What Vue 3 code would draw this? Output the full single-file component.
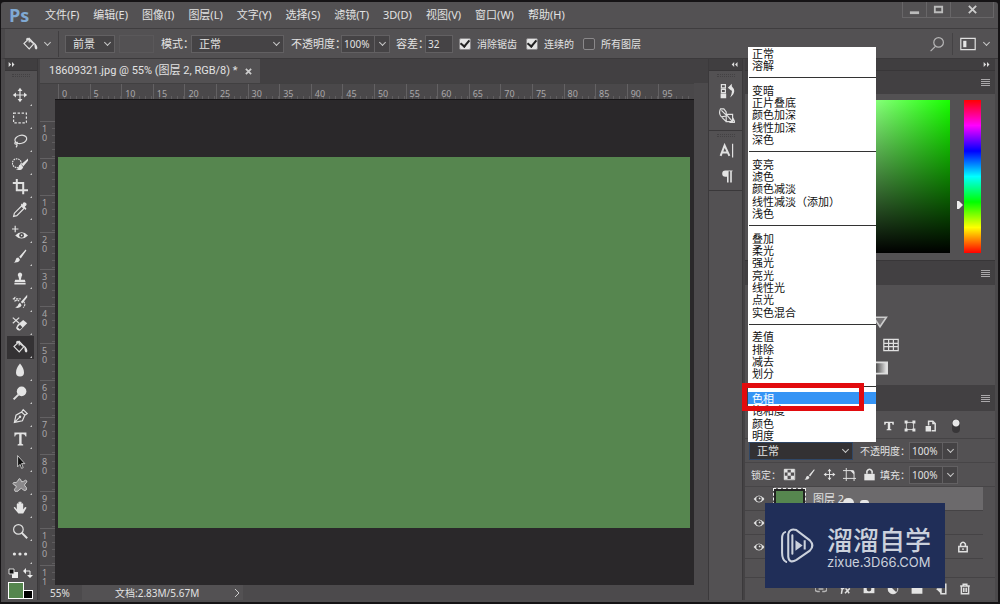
<script setup>
import { ref } from 'vue'

const menus = ['文件(F)', '编辑(E)', '图像(I)', '图层(L)', '文字(Y)', '选择(S)', '滤镜(T)', '3D(D)', '视图(V)', '窗口(W)', '帮助(H)']
const bucket = '<path d="M9 3 2.500 9.500 9 16l6-6.500z M6 7V3.500a2 2 0 0 1 3 0V8" class="s"/><path d="M15 8q5 4 4 8-2 2-3-1z" class="f"/><path d="m8 4 6 5" class="s"/>'
const brush = '<path d="M17 2 9 11l2 2 7-10zM8 12q-3 0-3.500 3T2 18q6 1 8-3z" class="f"/>'
const move = '<path d="M10 3v14M3 10h14" class="s"/><path d="M10 1 7 5h6zM10 19l-3-4h6zM1 10l4-3v6zM19 10l-4-3v6z" class="f"/>'
const tools = [
  { name: '移动', icon: move },
  { name: '矩形选框', icon: '<path d="M2 4h16v12H2z" class="s" stroke-dasharray="3 2"/>' },
  { name: '套索', icon: '<ellipse cx="11" cy="8" rx="7.500" ry="5" transform="rotate(-15 11 8)" class="s"/><path d="M5 11q-3 2 0 3 3-1 1-3M6 13q1 3-1 5" class="s"/>' },
  { name: '快速选择', icon: '<circle cx="6" cy="9" r="5.500" class="s" stroke-dasharray="2 1"/><path d="M20 3l-8 7 2 3 6-7zM11 10q-3 1-3 5l-3 2q7 2 9-3z" class="f"/>' },
  { name: '裁剪', icon: '<path d="M6 0v14h14M1 5h13v14" class="t"/>' },
  { name: '吸管', icon: '<path d="m12 5-9 9-1 4 4-1 9-9z" class="s"/><path d="m11 4 6 6 1-2-2-2q4-3 1-5t-4 2l-1-1z" class="f"/>' },
  { name: '红眼', icon: '<path d="M4 1v8M0 5h8" class="s"/><path d="M4 13q8-8 16 0-8 8-16 0z" class="f"/><circle cx="12" cy="13" r="3" class="d"/><circle cx="12" cy="13" r="1" class="f"/>' },
  { name: '画笔', icon: brush },
  { name: '仿制图章', icon: '<path d="M10 2a3 3 0 0 1 2 5l-1 4h5l1 3H3l1-3h5L8 7a3 3 0 0 1 2-5zM3 15h14v2H3z" class="f"/>' },
  { name: '历史记录画笔', icon: '<path d="M19 1l-8 9 2 2 6-8zM10 11q-2 1-3 4l-3 2q6 2 8-3z" class="f"/><path d="M1 6h10M2 6l3-3M3 9q4-2 6 0M14 9q4 4 0 8" class="s" stroke-dasharray="3 1"/>' },
  { name: '橡皮擦', icon: '<path d="m1 2 8 7M9 2 1 9" class="s"/><path d="m7 11 7-6 5 4-9 9q-3 1-5-3z" class="f"/><path d="m7 14 3-3 3 3-3 3z" class="d"/>' },
  { name: '油漆桶', icon: bucket, active: true },
  { name: '模糊', icon: '<path d="M10 2q5 6 5 11a5 5 0 0 1-10 0q0-5 5-11z" class="f"/>' },
  { name: '减淡', icon: '<circle cx="12" cy="8" r="6" class="f"/><path d="m8 12-6 6" class="t"/>' },
  { name: '钢笔', icon: '<path d="M3 18 5 9l7-4 4 4-3 7zM12 5l2-3 5 5-3 2M3 18l7-7" class="s"/><circle cx="10" cy="11" r="1.500" class="f"/>' },
  { name: '文字', icon: '<path d="M3 2h15v5h-1q-1-3-3-3h-2v12l2 1v1H7v-1l2-1V4H7Q4 4 4 7H3z" class="f"/>' },
  { name: '路径选择', icon: '<path d="M7 2v14l3-3 2 5 2-1-2-5h4z" fill="#111" stroke="#e2e2e2"/>' },
  { name: '自定形状', icon: '<path d="M9 2q2 0 3 4 2 0 5-2 3 1 1 3-3 2-2 4 3 2 2 5-2 2-4 0-2-3-4-1-2 4-6 3-2-2 0-4 2-1 1-3-3-1-4-3 1-2 4-1 2-1 4-5z" fill="#8a888a" stroke="#e0e0e0"/>' },
  { name: '抓手', icon: '<path d="M6 12V5q1-2 2 0v4-6q1-2 2 0v6-6q1-2 2 0v6-4q1-2 2 0v7l2-3q2-1 2 1l-4 7H8l-5-6q-2-3 1-2z" class="f"/>' },
  { name: '缩放', icon: '<circle cx="8" cy="8" r="6" class="s"/><path d="m12 12 7 7" class="t"/>' },
  { name: '更多', icon: '<circle cx="3" cy="10" r="2" class="f"/><circle cx="10" cy="10" r="2" class="f"/><circle cx="17" cy="10" r="2" class="f"/>' }
]
const across = Array.from({ length: 20 }, (_, i) => i * 5)
const down = ['10', '0', '10', '20', '30', '40', '50', '60', '70', '80', '90', '100', '11']
const modes = ['正常', '溶解', '', '变暗', '正片叠底', '颜色加深', '线性加深', '深色', '', '变亮', '滤色', '颜色减淡', '线性减淡（添加）', '浅色', '', '叠加', '柔光', '强光', '亮光', '线性光', '点光', '实色混合', '', '差值', '排除', '减去', '划分', '', '色相', '饱和度', '颜色', '明度']
const filters = [
  { name: '文字图层', icon: '<path d="M2 3h16v5h-2l-1-3h-3v10l2 1v1H6v-1l2-1V5H5L4 8H2z" class="f"/>' },
  { name: '形状图层', icon: '<path d="M4 4h12v12H4z" class="s"/><path d="M1 1h5v5H1zM14 1h5v5h-5zM1 14h5v5H1zM14 14h5v5h-5z" class="f"/>' },
  { name: '智能对象', icon: '<path d="M6 9V2h7l4 4v12h-6" class="t"/><path d="M12 2v5h5zM1 10h9v9H1z" class="f"/>' }
]
const locks = [
  { name: '锁定透明像素', icon: '<path d="M2 2h16v16H2z" class="s"/><path d="M2 2h5v5H2zM12 2h5v5h-5zM7 7h5v5H7zM2 12h5v5H2zM12 12h5v5h-5z" class="f"/>' },
  { name: '锁定图像像素', icon: brush },
  { name: '锁定位置', icon: move },
  { name: '锁定画板', icon: '<path d="M5 0v20M0 4h15l2 2v14M0 16h20" class="s"/><path d="m11 4 6 6V4z" class="f"/>' },
  { name: '全部锁定', icon: '<path d="M2 9h16v10H2z" class="f"/><path d="M6 9V5q4-6 8 0v4" class="t"/>' }
]
const actions = [
  { name: '链接图层', dim: true, icon: '<path d="M8 6H4a4 4 0 0 0 0 8h4M12 6h4a4 4 0 0 1 0 8h-4M6 10h8" class="t"/>' },
  { name: '图层样式', icon: '<path d="M10 4Q7 2 6 7L4 18M3 9h6M11 9l6 8M18 9l-8 8" class="t"/>' },
  { name: '图层蒙版', icon: '<path d="M1 3h18v14H1z" class="f"/><circle cx="10" cy="10" r="4" class="d"/>' },
  { name: '调整图层', icon: '<circle cx="10" cy="10" r="8" class="s"/><path d="M4 4a8 8 0 0 0 12 12z" class="f"/>' },
  { name: '新建组', icon: '<path d="M1 3h7l2 3h9v12H1z" class="f"/>' },
  { name: '新建图层', icon: '<path d="M6 2h12v16h-8V10H3" class="t"/><path d="M2 10h8v8z" class="f"/>' },
  { name: '删除图层', icon: '<path d="M2 5h16M7 5V2h6v3M4 5v13h12V5M8 8v7M12 8v7" class="t"/>' }
]
const eye = '<path d="M1 10q9-12 18 0-9 12-18 0z" class="f"/><circle cx="10" cy="10" r="4.500" class="d"/><circle cx="11" cy="9" r="1.500" class="f"/>'
const padlock = '<path d="M3 9h14v9H3zM6 9V5q4-6 8 0v4M10 12v3" class="t"/>'
const fore = ref('前景')
const mode = ref('正常')
const blend = ref('正常')
</script>

<template>
  <div class="app">
    <header class="menubar">
      <span class="logo">Ps</span>
      <nav><button v-for="m in menus" :key="m">{{ m }}</button></nav>
      <div class="winbtns">
        <button aria-label="最小化"><svg viewBox="0 0 12 12"><path d="M1 8h10v3H1z" fill="#bbb" /></svg></button>
        <button aria-label="最大化"><svg viewBox="0 0 12 12"><path d="M2 3h8v6H2z" fill="none" stroke="#bbb" stroke-width="2" /></svg></button>
        <button class="close" aria-label="关闭"><svg viewBox="0 0 12 12"><path d="m2 2 8 8m0-8-8 8" stroke="#ccc" stroke-width="2" /></svg></button>
      </div>
    </header>

    <section class="options">
      <button class="preset" aria-label="油漆桶预设"><svg class="ic" viewBox="0 0 20 20" v-html="bucket" /><i class="chev" /></button>
      <span class="pick fore"><select v-model="fore" aria-label="填充源"><option>前景</option></select><i class="chev" /></span>
      <span class="ghost" />
      <label for="mode">模式：</label>
      <span class="pick mode"><select id="mode" v-model="mode"><option>正常</option></select><i class="chev" /></span>
      <label class="opl" for="op">不透明度：</label>
      <span class="num"><input id="op" value="100%" /><button aria-label="不透明度滑块"><i class="chev" /></button></span>
      <label class="tol" for="tol">容差：</label>
      <input id="tol" class="tolbox" value="32" />
      <label class="chk"><input type="checkbox" checked />消除锯齿</label>
      <label class="chk"><input type="checkbox" checked />连续的</label>
      <label class="chk"><input type="checkbox" />所有图层</label>
      <div class="optright">
        <button aria-label="搜索"><svg class="ic dim" viewBox="0 0 20 20"><circle cx="12" cy="8" r="6" class="s" /><path d="m8 13-6 6" class="s" /></svg></button>
        <button class="space" aria-label="工作区"><svg class="ic" viewBox="0 0 20 20"><path d="M1 3h18v14H1z" class="s" /><path d="M4 6h4v8H4z" class="f" /></svg><i class="chev" /></button>
      </div>
    </section>

    <div class="work">
      <aside class="toolbar">
        <div class="dockhead left"><svg viewBox="0 0 8 6"><path d="m0 0 3 3-3 3zM4 0l3 3-3 3z" fill="#ddd" /></svg></div>
        <div class="grip" />
        <div class="tools">
          <button v-for="t in tools" :key="t.name" :class="{ active: t.active }" :aria-label="t.name"><svg class="ic" viewBox="0 0 20 20" v-html="t.icon" /></button>
        </div>
        <div class="colors">
          <div class="mini">
            <button aria-label="默认颜色"><svg viewBox="0 0 10 10"><path d="M4 4h6v6H4z" fill="#eee" /><path d="M1 1h5v5H1z" fill="#111" stroke="#ddd" /></svg></button>
            <button aria-label="切换颜色"><svg viewBox="0 0 10 10"><path d="M2 3h5v5" fill="none" stroke="#eee" /><path d="M0 3l3-3v6zM7 10 4 7h6z" fill="#eee" /></svg></button>
          </div>
          <div class="swatches"><button class="fg" aria-label="前景色" /><button class="bg" aria-label="背景色" /></div>
        </div>
      </aside>

      <main class="doc">
        <div class="tabs"><div class="tab">18609321.jpg @ 55% (图层 2, RGB/8) *<button aria-label="关闭文档"><svg viewBox="0 0 8 8"><path d="m1 1 6 6m0-6-6 6" stroke="#ccc" stroke-width="2" /></svg></button></div></div>
        <div class="hruler"><span v-for="n in across" :key="n">{{ n }}</span></div>
        <div class="stage">
          <div class="vruler"><span v-for="(n, i) in down" :key="i">{{ n }}</span></div>
          <div class="canvas"><div class="image" /></div>
        </div>
        <footer class="status"><span class="zoom">55%</span><div class="info"><span>文档:2.83M/5.67M</span><svg viewBox="0 0 6 10"><path d="m1 1 4 4-4 4" fill="none" stroke="#ccc" /></svg></div></footer>
      </main>

      <aside class="strip">
        <div class="dockhead"><svg viewBox="0 0 8 6"><path d="M3 0 0 3l3 3zM7 0 4 3l3 3z" fill="#ddd" /></svg></div>
        <div class="group">
          <div class="grip" />
          <button aria-label="历史记录"><svg class="ic" viewBox="0 0 20 20"><path d="M3 2h5v4H3zM3 8h5v4H3z" class="s" /><path d="M2 13h7v6H2zM11 6l5-5v3q7 7-2 14 3-7 2-10v2z" class="f" /></svg></button>
          <button aria-label="画笔预设"><svg class="ic" viewBox="0 0 20 20"><path d="M2 1q-3 6 1 10l6-1V5L6 1zM3 3l6 6M9 8h8v9H9zM9 8l8 9M17 12l3 6h-7M4 12l5 5" class="s" /></svg></button>
        </div>
        <div class="group">
          <div class="grip" />
          <button aria-label="字符"><svg class="ic" viewBox="0 0 20 20"><path d="m2 16 5-13 6 13M4 12h7" class="t" /><path d="M17 1v17" class="s" /></svg></button>
          <button aria-label="段落"><svg class="ic" viewBox="0 0 20 20"><path d="M10 3v8H8a4 4 0 0 1 0-8zM10 3h2v15h-2zM14 3h2v15h-2zM9 3h8v1H9z" class="f" /></svg></button>
        </div>
      </aside>

      <aside class="panels">
        <div class="dockhead"><svg viewBox="0 0 8 6"><path d="m0 0 3 3-3 3zM4 0l3 3-3 3z" fill="#ddd" /></svg></div>
        <div class="phead"><button aria-label="颜色面板菜单" class="burger" /></div>
        <div class="color"><div class="field" /><svg class="mark" viewBox="0 0 6 8"><path d="M0 0h2l4 4-4 4H0z" fill="#eee" /></svg><div class="hue" /></div>
        <div class="phead second"><button aria-label="调整面板菜单" class="burger" /></div>
        <div class="adjust">
          <div><svg class="ic" viewBox="0 0 20 20"><path d="M2 4h16l-8 12z" fill="#777577" stroke="#ccc" stroke-width="2" /></svg></div>
          <div class="mid"><svg class="ic" viewBox="0 0 20 20"><path d="M1 3h18v14H1zM7 3v14M13 3v14M1 8h18M1 12h18" class="s" /></svg></div>
          <div><svg class="ic" viewBox="0 0 20 20"><defs><linearGradient id="fade"><stop stop-color="#222" /><stop offset="1" stop-color="#eee" /></linearGradient></defs><path d="M1 3h18v14H1z" fill="url(#fade)" stroke="#ddd" stroke-width="2" /></svg></div>
        </div>
        <div class="phead third"><button aria-label="图层面板菜单" class="burger" /></div>
        <div class="filter"><button v-for="f in filters" :key="f.name" :aria-label="f.name"><svg class="ic" viewBox="0 0 20 20" v-html="f.icon" /></button><button class="toggle" aria-label="过滤开关" /></div>
        <div class="prow blendrow">
          <div class="pick blend">
            <select v-model="blend" aria-label="混合模式"><option v-for="m in modes.filter(Boolean)" :key="m">{{ m }}</option></select><i class="chev" />
            <ul class="modes" role="listbox" aria-label="混合模式列表">
              <li v-for="(m, i) in modes" :key="i" :role="m ? 'option' : 'separator'" :class="{ sep: !m, hot: m === '色相' }">{{ m }}<span v-if="m === '色相'" class="redbox" /></li>
            </ul>
          </div>
          <label for="lop">不透明度：</label>
          <span class="num"><input id="lop" value="100%" /><button aria-label="图层不透明度滑块"><i class="chev" /></button></span>
        </div>
        <div class="prow">
          <span class="lockl">锁定：</span>
          <div class="locks"><button v-for="l in locks" :key="l.name" :aria-label="l.name"><svg class="ic" viewBox="0 0 20 20" v-html="l.icon" /></button></div>
          <label for="fill">填充：</label>
          <span class="num"><input id="fill" value="100%" /><button aria-label="填充滑块"><i class="chev" /></button></span>
        </div>
        <div class="layers">
          <div v-for="n in 3" :key="n" class="layer" :class="{ sel: n === 1 }">
            <button class="vis" aria-label="可见性"><svg class="ic" viewBox="0 0 20 20" v-html="eye" /></button>
            <div class="body"><template v-if="n === 1"><span class="thumb" /><span>图层 2</span></template><svg v-if="n === 3" class="ic lk" viewBox="0 0 20 20" v-html="padlock" /></div>
          </div>
        </div>
        <div class="actions"><button v-for="a in actions" :key="a.name" :class="{ dim: a.dim }" :aria-label="a.name"><svg class="ic" viewBox="0 0 20 20" v-html="a.icon" /></button></div>
        <div class="brand">
          <i class="blob" /><i class="blob small" />
          <svg viewBox="0 0 34 36"><path d="M5 5Q2 6 2 11v14q0 7 4 9M12 26V8M8 29V7q1-6 8-4l13 10q5 5 0 10L16 32q-7 4-8-3z" fill="none" stroke="#cbd1dc" stroke-width="2" stroke-linecap="round" /><path d="m15 13 7 5-7 5zM23 13h2v9h-2z" fill="#cbd1dc" /></svg>
          <div><b>溜溜自学</b><span>zixue.3D66.COM</span></div>
        </div>
      </aside>
    </div>
  </div>
</template>

<style>
body { margin: 0; background: #151315; overflow: hidden; }
.ic .s { fill: none; stroke: #e0e0e0; stroke-width: 1.5; }
.ic .t { fill: none; stroke: #e0e0e0; stroke-width: 2.5; }
.ic .f { fill: #e4e4e4; }
.ic .d { fill: #4a484a; }
</style>

<style scoped>
.app, .app * { box-sizing: border-box; }
.app { height: 100vh; min-height: 604px; display: flex; flex-direction: column; padding: 2px 2px 2px 1px; background: #151315; color: #e2e2e2; font: 11px/16px "Noto Sans", "Noto Sans CJK SC", sans-serif; }
button { padding: 0; border: 0; background: none; color: inherit; font: inherit; display: flex; align-items: center; justify-content: center; }
input, select { margin: 0; color: inherit; font: inherit; border: 1px solid #626062; background: #454345; border-radius: 0; appearance: none; min-width: 0; outline: 0; }
svg { display: block; flex: none; }
label, span { white-space: nowrap; }
.ic { width: 16px; height: 16px; }
.chev { width: 5px; height: 5px; border: solid #c8c8c8; border-width: 0 1px 1px 0; transform: rotate(45deg); flex: none; margin-top: -3px; }

.menubar { height: 27px; flex: none; display: flex; align-items: center; background: #535153; border-bottom: 1px solid #3f3d3f; border-radius: 3px 3px 0 0; padding-left: 8px; }
.logo { color: #80a9d3; font: bold 18px/24px "Open Sans", sans-serif; width: 36px; }
nav { display: flex; gap: 14px; }
.winbtns { margin: 0 4px 0 auto; align-self: flex-start; display: flex; border: 1px solid #686668; border-top: 0; }
.winbtns button { width: 24px; height: 15px; border-right: 1px solid #686668; }
.winbtns .close { width: 42px; border: 0; }
.winbtns svg { width: 11px; height: 11px; }

.options { height: 30px; flex: none; display: flex; align-items: center; background: #535153; border-left: 4px solid #4b494b; border-bottom: 1px solid #3b393b; padding-left: 17px; }
.preset { width: 37px; height: 26px; justify-content: flex-start; gap: 7px; border-right: 1px solid #403e40; margin-right: 6px; }
.pick { position: relative; display: flex; align-items: center; }
.pick select { width: 100%; height: 18px; padding: 0 7px; }
.pick > .chev { position: absolute; right: 5px; pointer-events: none; }
.fore { width: 50px; }
.ghost { width: 35px; height: 18px; margin: 0 7px 0 4px; border: 1px solid #5a585a; }
.mode { width: 93px; margin-left: -3px; margin-right: 7px; }
.opl { margin-right: -5px; }
.num { display: flex; }
.num input { width: 34px; height: 18px; padding: 0 0 0 2px; }
.options .num input, .tolbox { font-size: 10px; }
.num button { width: 15px; height: 18px; background: #454345; border: 1px solid #626062; border-left: 0; }
.tol { margin-left: 6px; margin-right: -4px; }
.tolbox { width: 28px; height: 18px; padding-left: 2px; margin-right: 6px; }
.chk { display: flex; align-items: center; gap: 6px; margin-right: 9px; font-size: 10px; }
.chk input { width: 12px; height: 12px; border: 1px solid #8a888a; border-radius: 2px; background: #4c4a4c; display: grid; place-items: center; }
.chk input:checked { background: #e4e4e4; }
.chk input:checked::after { content: ""; width: 4px; height: 7px; border: solid #222; border-width: 0 2px 2px 0; transform: rotate(40deg); margin-top: -2px; }
.optright { margin: 0 9px 0 auto; display: flex; align-items: center; gap: 7px; }
.dim { opacity: .7; }
.space { gap: 8px; border-left: 1px solid #444244; padding-left: 7px; height: 22px; }

.work { flex: 1; min-height: 0; display: flex; background: #444244; border-bottom: 2px solid #4e4c4e; }
.dockhead { height: 12px; flex: none; display: flex; align-items: center; justify-content: flex-end; padding-right: 4px; background: #403e40; border-bottom: 1px solid #383638; }
.dockhead svg { width: 8px; height: 5px; }
.dockhead.left { justify-content: flex-start; padding-left: 3px; }
.grip { width: 18px; height: 3px; margin: 3px auto 0; flex: none; border: 1px dotted #434143; }
.toolbar { width: 37px; flex: none; display: flex; flex-direction: column; background: #535153; border-left: 4px solid #4b494b; border-right: 1px solid #3a383a; }
.tools { flex: 1; display: grid; grid-template-rows: repeat(21, 1fr); margin: 7px 3px 0 2px; }
.tools button { position: relative; padding-right: 1px; }
.tools button::after { content: ""; position: absolute; right: 2px; bottom: 1px; border: 1px solid #c8c8c8; border-top-color: transparent; border-left-color: transparent; }
.tools .active { background: #343234; }
.colors { height: 35px; flex: none; padding: 3px 4px 0 3px; }
.mini { display: flex; justify-content: space-between; }
.mini svg { width: 10px; height: 10px; }
.swatches { display: flex; align-items: flex-end; margin-top: 4px; }
.fg { width: 17px; height: 17px; border: 1px solid #fff; background: #55864e; }
.bg { width: 9px; height: 9px; border: solid #fff; border-width: 1px 1px 1px 0; background: #000; }

.doc { flex: 1; min-width: 0; display: flex; flex-direction: column; background: #4c4a4c; margin-left: 2px; }
.tabs { height: 24px; flex: none; background: #424042; display: flex; }
.tab { display: flex; align-items: center; gap: 7px; padding: 0 8px 0 9px; background: #535153; white-space: nowrap; font-family: Roboto, "Noto Sans CJK SC", sans-serif; }
.tab svg { width: 7px; height: 7px; }
.hruler { height: 16px; flex: none; display: flex; margin-right: 14px; padding: 0 4px 0 18px; border-top: 1px solid #414041; color: #a9a7a9; font-size: 9px; line-height: 19px; background: #4a484a; }
.hruler span { flex: 1 1 0; border-left: 1px solid #636163; padding-left: 3px; background: repeating-linear-gradient(90deg, transparent 0 5px, #5f5d5f 5px 6px) bottom / 100% 3px no-repeat; }
.stage { flex: 1; min-height: 0; display: flex; margin-right: 14px; }
.vruler { width: 15px; flex: none; overflow: hidden; padding-top: 22px; color: #a9a7a9; font-size: 9px; line-height: 9px; background: #4a484a; }
.vruler span { display: block; height: 37px; border-top: 1px solid #636163; padding: 2px 8px 0 2px; white-space: normal; word-break: break-all; background: repeating-linear-gradient(#0000 0 6px, #5f5d5f 6px 7px) right / 3px 100% no-repeat; }
.canvas { flex: 1; background: #2a282a; display: flex; align-items: center; padding: 0 4px 0 3px; border-top: 1px solid #171517; }
.image { width: 100%; aspect-ratio: 631 / 370; background: #56864f; }
.status { height: 15px; flex: none; display: flex; align-items: center; background: #4c4a4c; }
.zoom { width: 42px; padding-left: 10px; font-size: 10px; }
.info { width: 161px; height: 15px; display: flex; align-items: center; justify-content: space-between; padding: 0 3px 0 33px; background: #535153; font-size: 10px; }
.info svg { width: 6px; height: 10px; }

.strip { width: 35px; flex: none; background: #535153; border: solid #3b393b; border-width: 0 1px; }
.strip .dockhead { padding-right: 3px; }
.group { display: flow-root; height: 60px; border-bottom: 1px solid #3a383a; }
.group button { width: 36px; height: 25px; }
.group .grip + button { margin-top: 1px; }

.panels { position: relative; width: 253px; flex: none; display: flex; flex-direction: column; background: #535153; margin-left: 2px; border-right: 3px solid #4b494b; }
.phead { height: 23px; flex: none; display: flex; justify-content: flex-end; align-items: center; padding-right: 5px; background: #424042; }
.second { height: 25px; border-top: 1px solid #383638; }
.third { height: 26px; }
.burger { width: 9px; height: 7px; background: repeating-linear-gradient(#aaa8aa 0 1px, transparent 1px 2px); }
.color { height: 166px; flex: none; display: flex; padding: 6px 14px 7px 50px; }
.field { flex: 1; background: linear-gradient(to top, #000, transparent), linear-gradient(to right, #fff, #18ff00); }
.mark { width: 6px; height: 8px; margin: 101px 1px 0 7px; }
.hue { width: 17px; background: linear-gradient(red, magenta, blue, cyan, lime, yellow, red); }
.adjust { height: 100px; flex: none; display: flex; flex-direction: column; justify-content: flex-end; gap: 7px; padding: 0 0 9px 127px; }
.mid { padding-left: 11px; }
.filter { height: 28px; flex: none; display: flex; align-items: center; justify-content: flex-end; gap: 9px; padding: 2px 35px 0 0; border-bottom: 1px solid #454345; }
.filter .ic { width: 12px; height: 12px; }
.toggle { width: 8px; height: 14px; border-radius: 4px; background: radial-gradient(circle at 4px 4px, #e6e6e6 3px, #383638 4px); margin-left: 6px; }
.prow { height: 24px; flex: none; display: flex; align-items: center; border-bottom: 1px solid #474547; padding: 0 37px 0 4px; font-size: 10px; }
.prow label { margin-left: auto; }
.prow > label { margin-right: -1px; }
.blend { width: 104px; font-size: 11px; }
.blend select { background: #333133; border-color: #304766; }
.modes { position: absolute; z-index: 2; left: -1px; bottom: 100%; width: 128px; height: 395px; margin: 0; padding: 0; list-style: none; display: grid; grid-template-rows: repeat(32, 1fr); background: #fff; color: #111; font: 11px/12px "Noto Sans CJK SC", sans-serif; }
.modes li { position: relative; padding-left: 4px; min-height: 0; white-space: nowrap; }
.modes .sep::before { content: ""; position: absolute; left: 1px; right: 0; top: 6px; border-top: 1px solid #333; }
.modes .hot { background: #3594f5; color: #fff; }
.redbox { position: absolute; z-index: 3; left: -6px; top: -9px; width: 122px; height: 28px; border: 5px solid #e20b0e; }
.locks { display: flex; align-items: center; gap: 7px; }
.locks .ic { width: 13px; height: 13px; }
.lockl { width: 34px; padding-left: 2px; }
.layers { flex: 1; }
.layer { height: 24px; display: flex; margin-right: 12px; border-bottom: 1px solid #454345; }
.vis { width: 28px; }
.vis .ic { width: 12px; height: 12px; }
.body { flex: 1; display: flex; align-items: center; gap: 8px; border-left: 1px solid #484648; }
.sel .body { background: #6c6a6c; }
.thumb { width: 31px; height: 20px; background: #56864f; border: 2px solid #222; outline: 1px dashed #eee; }
.lk { width: 12px; height: 12px; margin: 0 14px 0 auto; }
.actions { height: 23px; flex: none; display: flex; align-items: center; justify-content: flex-end; gap: 12px; padding-right: 24px; border-top: 1px solid #454345; }
.actions .ic { width: 12px; height: 12px; }
.brand { position: absolute; z-index: 4; right: 50px; bottom: 12px; width: 180px; height: 85px; display: flex; align-items: center; gap: 12px; padding-left: 15px; background: #202e58; color: #cbd1dc; }
.brand > svg { width: 35px; height: 37px; }
.brand b, .brand span { display: block; }
.brand b { font: 500 26px/32px "Noto Sans CJK SC", sans-serif; }
.brand span { font: 13px/14px Inter, sans-serif; }
.blob { position: absolute; left: 78px; bottom: 100%; width: 11px; height: 5px; border-radius: 6px 6px 0 0; background: #e6e6e6; }
.blob.small { left: 95px; width: 9px; height: 3px; }
</style>
